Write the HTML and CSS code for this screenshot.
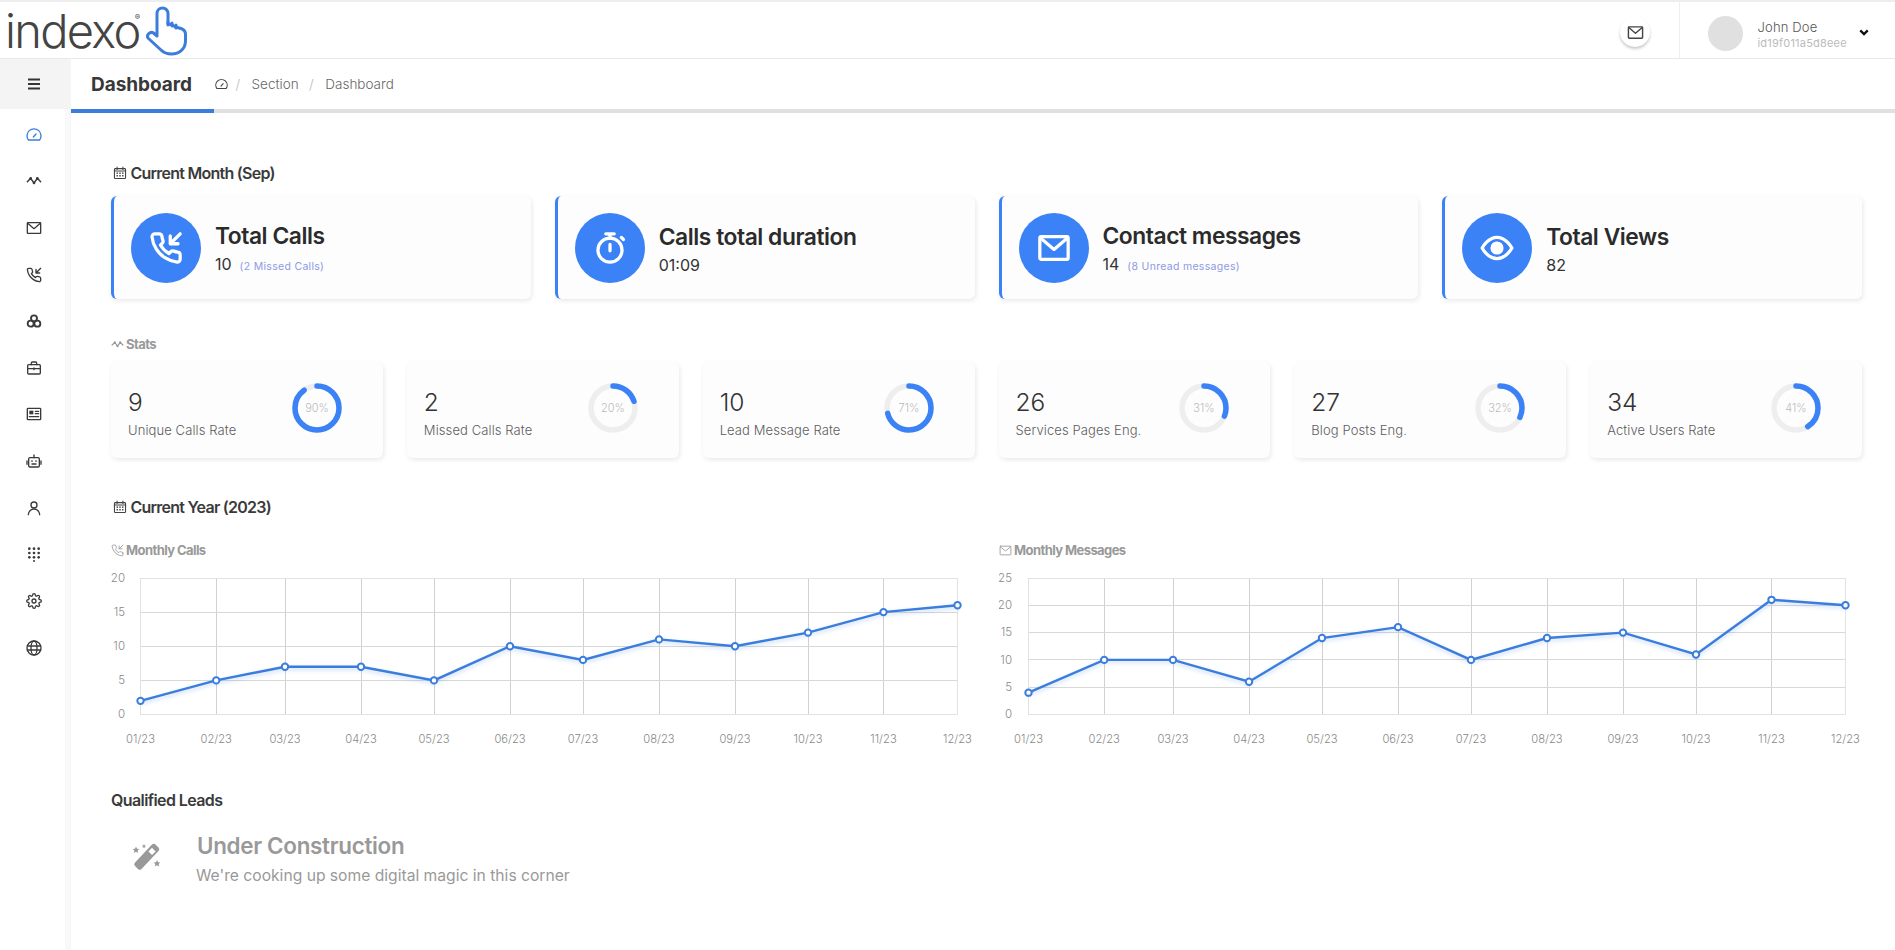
FILE: index.html
```html
<!DOCTYPE html>
<html lang="en">
<head>
<meta charset="utf-8">
<title>Dashboard</title>
<link rel="stylesheet" href="styles.css">
</head>
<body>
<svg class="defs" width="0" height="0">
  <defs>
    <symbol id="i-gauge" viewBox="0 0 24 24"><path d="M3.6 19.5a10.5 10.5 0 1 1 16.8 0z"/><path d="M11 15l4-4.5"/></symbol>
    <symbol id="i-stat" viewBox="0 0 24 24"><path d="M2 13l5-5 5 7 5-7 5 5" stroke-width="2.200"/><g fill="currentColor" stroke="none"><circle cx="7" cy="8" r="2"/><circle cx="12" cy="15" r="2"/><circle cx="17" cy="8" r="2"/></g></symbol>
    <symbol id="i-mail" viewBox="0 0 24 24"><rect x="2" y="4" width="20" height="16" rx="1"/><path d="M2.500 5l9.500 8 9.500-8"/></symbol>
    <symbol id="i-call" viewBox="0 0 24 24"><path d="M22 16.920v3a2 2 0 0 1-2.180 2 19.790 19.790 0 0 1-8.630-3.070 19.500 19.500 0 0 1-6-6 19.790 19.790 0 0 1-3.070-8.670A2 2 0 0 1 4.110 2h3a2 2 0 0 1 2 1.720 12.840 12.840 0 0 0 .7 2.810 2 2 0 0 1-.45 2.110L8.090 9.910a16 16 0 0 0 6 6l1.270-1.270a2 2 0 0 1 2.110-.45 12.840 12.840 0 0 0 2.810.7A2 2 0 0 1 22 16.920z"/><path d="M22 2l-7 7M15 3.500V9h5.500"/></symbol>
    <symbol id="i-cluster" viewBox="0 0 24 24"><circle cx="12" cy="8" r="4.500" stroke-width="2.800"/><circle cx="7" cy="16" r="4.500" stroke-width="2.800"/><circle cx="17" cy="16" r="4.500" stroke-width="2.800"/></symbol>
    <symbol id="i-case" viewBox="0 0 24 24"><rect x="2.500" y="7" width="19" height="14" rx="1.500"/><path d="M8 7V4.500A1.500 1.500 0 0 1 9.500 3h5A1.500 1.500 0 0 1 16 4.500V7M2.500 13h19M12 12v2.500"/></symbol>
    <symbol id="i-news" viewBox="0 0 24 24"><rect x="2" y="3.500" width="20" height="17" rx="1"/><rect x="5" y="7" width="6" height="5.500" fill="currentColor" stroke="none"/><path d="M14 8h5M14 11.500h5M5 16h14"/></symbol>
    <symbol id="i-bot" viewBox="0 0 24 24"><rect x="4" y="7" width="16" height="14" rx="2"/><path d="M12 7V3M1.500 12v5M22.500 12v5M9 16.500h6"/><circle cx="9" cy="12" r="1.300" fill="currentColor" stroke="none"/><circle cx="15" cy="12" r="1.300" fill="currentColor" stroke="none"/></symbol>
    <symbol id="i-user" viewBox="0 0 24 24"><circle cx="12" cy="7.500" r="4.500"/><path d="M3.500 22a8.500 8.500 0 0 1 17 0"/></symbol>
    <symbol id="i-dial" viewBox="0 0 24 24"><g fill="currentColor" stroke="none"><circle cx="5" cy="4" r="2"/><circle cx="12" cy="4" r="2"/><circle cx="19" cy="4" r="2"/><circle cx="5" cy="10.500" r="2"/><circle cx="12" cy="10.500" r="2"/><circle cx="19" cy="10.500" r="2"/><circle cx="5" cy="17" r="2"/><circle cx="12" cy="17" r="2"/><circle cx="19" cy="17" r="2"/><circle cx="12" cy="22.500" r="1.500"/></g></symbol>
    <symbol id="i-cog" viewBox="0 0 24 24"><path d="M12 15a3 3 0 1 0 0-6 3 3 0 0 0 0 6z"/><path d="M19.400 15a1.650 1.650 0 0 0 .33 1.820l.06.06a2 2 0 0 1 0 2.830 2 2 0 0 1-2.830 0l-.06-.06a1.650 1.650 0 0 0-1.820-.33 1.650 1.650 0 0 0-1 1.510V21a2 2 0 0 1-2 2 2 2 0 0 1-2-2v-.09A1.650 1.650 0 0 0 9 19.400a1.650 1.650 0 0 0-1.820.33l-.06.06a2 2 0 0 1-2.830 0 2 2 0 0 1 0-2.830l.06-.06a1.650 1.650 0 0 0 .33-1.820 1.650 1.650 0 0 0-1.510-1H3a2 2 0 0 1-2-2 2 2 0 0 1 2-2h.09A1.650 1.650 0 0 0 4.600 9a1.650 1.650 0 0 0-.33-1.820l-.06-.06a2 2 0 0 1 0-2.830 2 2 0 0 1 2.830 0l.06.06a1.650 1.650 0 0 0 1.820.33H9a1.650 1.650 0 0 0 1-1.510V3a2 2 0 0 1 2-2 2 2 0 0 1 2 2v.09a1.650 1.650 0 0 0 1 1.510 1.650 1.650 0 0 0 1.820-.33l.06-.06a2 2 0 0 1 2.830 0 2 2 0 0 1 0 2.830l-.06.06a1.650 1.650 0 0 0-.33 1.820V9a1.650 1.650 0 0 0 1.510 1H21a2 2 0 0 1 2 2 2 2 0 0 1-2 2h-.09a1.650 1.650 0 0 0-1.510 1z"/></symbol>
    <symbol id="i-globe" viewBox="0 0 24 24"><circle cx="12" cy="12" r="10.500"/><ellipse cx="12" cy="12" rx="4.500" ry="10.500"/><path d="M2 9h20M2 15h20"/></symbol>
    <symbol id="i-cal" viewBox="0 0 24 24"><rect x="2.500" y="4.500" width="19" height="17" rx="1.500"/><path d="M7 2v4M17 2v4M2.500 8.500h19"/><g fill="currentColor" stroke="none"><rect x="6" y="11" width="2.500" height="2.500"/><rect x="10.750" y="11" width="2.500" height="2.500"/><rect x="15.500" y="11" width="2.500" height="2.500"/><rect x="6" y="15.500" width="2.500" height="2.500"/><rect x="10.750" y="15.500" width="2.500" height="2.500"/><rect x="15.500" y="15.500" width="2.500" height="2.500"/></g></symbol>
    <symbol id="i-timer" viewBox="0 0 24 24"><circle cx="12" cy="13.500" r="8.500"/><path d="M9 2h6M12 2v3M12 9.500v4.500M20 4.500l1.500 1.500"/></symbol>
    <symbol id="i-eye" viewBox="0 0 24 24"><path d="M1.500 12S5.500 4.500 12 4.500 22.500 12 22.500 12 18.500 19.500 12 19.500 1.500 12 1.500 12z"/><circle cx="12" cy="12" r="3.500" fill="currentColor"/></symbol>
    <symbol id="i-wand" viewBox="0 0 32 32"><g fill="currentColor" stroke="none"><path d="M21 3.500a2.500 2.500 0 0 1 3.500 0l3 3a2.500 2.500 0 0 1 0 3.500L10.500 28a2.500 2.500 0 0 1-3.500 0l-3-3a2.500 2.500 0 0 1 0-3.500z"/><path d="M5 5.500l1 2.300 2.400.2-1.800 1.600.6 2.400L5 10.700 2.800 12l.6-2.400L1.600 8l2.400-.2zM13 3l.6 1.400 1.500.1-1.100 1 .3 1.500-1.300-.8-1.300.8.3-1.500-1.100-1 1.500-.1zM26 19l1 2.300 2.400.2-1.800 1.600.6 2.400-2.200-1.300-2.200 1.300.6-2.400-1.800-1.600 2.400-.2z"/></g><path d="M21 14l-3.500-3.500 3.500-3.700 3.600 3.600z" fill="#fff" stroke="none"/></symbol>
  </defs>
</svg>

<header class="topbar">
  <div class="logo">
    <span class="logo-text">indexo<sup class="logo-r">®</sup></span>
    <svg class="logo-hand" viewBox="0 0 44 52"><path d="M12 8.500a5.500 5.500 0 0 1 11 0V19l4 .8 3.500 2.200 5.500 1.500c3 1 4.500 3 4.500 6V36c0 7.500-6 13-14 13-4.500 0-8-1.500-10.500-4L3.500 33.500c-3-3.500 2-7.500 5-5.500l3.500 3z"/><path d="M23 17v3M27 18v3M31 20v3"/></svg>
  </div>
  <div class="top-actions">
    <button class="mail-btn"><svg class="ic ic-17"><use href="#i-mail"/></svg></button>
    <div class="profile">
      <span class="avatar"></span>
      <span class="who"><span class="who-name">John Doe</span><span class="who-id">id19f011a5d8eee</span></span>
      <svg class="chev" viewBox="0 0 12 8"><path d="M1.500 1.500L6 6l4.500-4.500"/></svg>
    </div>
  </div>
</header>

<div class="shell">
  <aside class="sidebar">
    <div class="toggle"><svg class="burger" viewBox="0 0 14 12"><path d="M1 1.500h12M1 6h12M1 10.500h12"/></svg></div>
    <nav class="nav">
      <a class="nav-item active"><svg class="ic ic-16"><use href="#i-gauge"/></svg></a>
      <a class="nav-item"><svg class="ic ic-16"><use href="#i-stat"/></svg></a>
      <a class="nav-item"><svg class="ic ic-16"><use href="#i-mail"/></svg></a>
      <a class="nav-item"><svg class="ic ic-16"><use href="#i-call"/></svg></a>
      <a class="nav-item"><svg class="ic ic-16"><use href="#i-cluster"/></svg></a>
      <a class="nav-item"><svg class="ic ic-16"><use href="#i-case"/></svg></a>
      <a class="nav-item"><svg class="ic ic-16"><use href="#i-news"/></svg></a>
      <a class="nav-item"><svg class="ic ic-16"><use href="#i-bot"/></svg></a>
      <a class="nav-item"><svg class="ic ic-16"><use href="#i-user"/></svg></a>
      <a class="nav-item"><svg class="ic ic-16"><use href="#i-dial"/></svg></a>
      <a class="nav-item"><svg class="ic ic-16"><use href="#i-cog"/></svg></a>
      <a class="nav-item"><svg class="ic ic-16"><use href="#i-globe"/></svg></a>
    </nav>
  </aside>

  <main class="main">
    <div class="titlebar">
      <h1 class="page-title">Dashboard</h1>
      <div class="crumbs">
        <svg class="ic ic-13"><use href="#i-gauge"/></svg>
        <span class="sep">/</span><span>Section</span>
        <span class="sep">/</span><span>Dashboard</span>
      </div>
    </div>

    <div class="content">
      <h2 class="section first"><svg class="ic ic-14"><use href="#i-cal"/></svg>Current Month (Sep)</h2>
      <div class="kpis">
        <div class="kpi"><span class="kpi-ico"><svg class="ic ic-34"><use href="#i-call"/></svg></span><div><div class="kpi-title">Total Calls</div><div class="kpi-val">10<small>(2 Missed Calls)</small></div></div></div>
        <div class="kpi"><span class="kpi-ico"><svg class="ic ic-34"><use href="#i-timer"/></svg></span><div><div class="kpi-title">Calls total duration</div><div class="kpi-val">01:09</div></div></div>
        <div class="kpi"><span class="kpi-ico"><svg class="ic ic-34"><use href="#i-mail"/></svg></span><div><div class="kpi-title">Contact messages</div><div class="kpi-val">14<small>(8 Unread messages)</small></div></div></div>
        <div class="kpi"><span class="kpi-ico"><svg class="ic ic-34"><use href="#i-eye"/></svg></span><div><div class="kpi-title">Total Views</div><div class="kpi-val">82</div></div></div>
      </div>

      <h3 class="sub stats-title"><svg class="ic ic-13"><use href="#i-stat"/></svg>Stats</h3>
      <div class="stats">
        <div class="stat"><div class="stat-text"><div class="stat-num">9</div><div class="stat-label">Unique Calls Rate</div></div><svg class="donut" viewBox="0 0 50 50"><circle class="track" cx="25" cy="25" r="22"/><circle class="arc" cx="25" cy="25" r="22" pathLength="100" stroke-dasharray="90 100" transform="rotate(-90 25 25)"/><text x="25" y="29">90%</text></svg></div>
        <div class="stat"><div class="stat-text"><div class="stat-num">2</div><div class="stat-label">Missed Calls Rate</div></div><svg class="donut" viewBox="0 0 50 50"><circle class="track" cx="25" cy="25" r="22"/><circle class="arc" cx="25" cy="25" r="22" pathLength="100" stroke-dasharray="20 100" transform="rotate(-90 25 25)"/><text x="25" y="29">20%</text></svg></div>
        <div class="stat"><div class="stat-text"><div class="stat-num">10</div><div class="stat-label">Lead Message Rate</div></div><svg class="donut" viewBox="0 0 50 50"><circle class="track" cx="25" cy="25" r="22"/><circle class="arc" cx="25" cy="25" r="22" pathLength="100" stroke-dasharray="71 100" transform="rotate(-90 25 25)"/><text x="25" y="29">71%</text></svg></div>
        <div class="stat"><div class="stat-text"><div class="stat-num">26</div><div class="stat-label">Services Pages Eng.</div></div><svg class="donut" viewBox="0 0 50 50"><circle class="track" cx="25" cy="25" r="22"/><circle class="arc" cx="25" cy="25" r="22" pathLength="100" stroke-dasharray="31 100" transform="rotate(-90 25 25)"/><text x="25" y="29">31%</text></svg></div>
        <div class="stat"><div class="stat-text"><div class="stat-num">27</div><div class="stat-label">Blog Posts Eng.</div></div><svg class="donut" viewBox="0 0 50 50"><circle class="track" cx="25" cy="25" r="22"/><circle class="arc" cx="25" cy="25" r="22" pathLength="100" stroke-dasharray="32 100" transform="rotate(-90 25 25)"/><text x="25" y="29">32%</text></svg></div>
        <div class="stat"><div class="stat-text"><div class="stat-num">34</div><div class="stat-label">Active Users Rate</div></div><svg class="donut" viewBox="0 0 50 50"><circle class="track" cx="25" cy="25" r="22"/><circle class="arc" cx="25" cy="25" r="22" pathLength="100" stroke-dasharray="41 100" transform="rotate(-90 25 25)"/><text x="25" y="29">41%</text></svg></div>
      </div>

      <h2 class="section year"><svg class="ic ic-14"><use href="#i-cal"/></svg>Current Year (2023)</h2>
      <div class="charts">
        <section>
          <h3 class="sub"><svg class="ic ic-13"><use href="#i-call"/></svg>Monthly Calls</h3>
          <svg class="chart" width="864" height="190" viewBox="0 0 864 190">
            <path class="grid-v" d="M105.200 12V148.500M174 12V148.500M250 12V148.500M323 12V148.500M399 12V148.500M472 12V148.500M548 12V148.500M624 12V148.500M697 12V148.500M772.500 12V148.500"/>
            <path class="grid-h" d="M29.500 46.100H846.500M29.500 80.250H846.500M29.500 114.400H846.500"/>
            <path class="grid-o" d="M29.500 12H846.500V148.500H29.500z"/>
            <g class="ylab"><text x="14" y="16">20</text><text x="14" y="50">15</text><text x="14" y="84">10</text><text x="14" y="118">5</text><text x="14" y="152">0</text></g>
            <g class="xlab"><text x="29.500" y="177">01/23</text><text x="105.200" y="177">02/23</text><text x="174" y="177">03/23</text><text x="250" y="177">04/23</text><text x="323" y="177">05/23</text><text x="399" y="177">06/23</text><text x="472" y="177">07/23</text><text x="548" y="177">08/23</text><text x="624" y="177">09/23</text><text x="697" y="177">10/23</text><text x="772.500" y="177">11/23</text><text x="846.500" y="177">12/23</text></g>
            <polyline class="line" points="29.500,134.850 105.200,114.400 174,100.700 250,100.700 323,114.400 399,80.250 472,93.900 548,73.400 624,80.250 697,66.600 772.500,46.100 846.500,39.300"/>
            <g class="pts"><circle cx="29.500" cy="134.850" r="3.200"/><circle cx="105.200" cy="114.400" r="3.200"/><circle cx="174" cy="100.700" r="3.200"/><circle cx="250" cy="100.700" r="3.200"/><circle cx="323" cy="114.400" r="3.200"/><circle cx="399" cy="80.250" r="3.200"/><circle cx="472" cy="93.900" r="3.200"/><circle cx="548" cy="73.400" r="3.200"/><circle cx="624" cy="80.250" r="3.200"/><circle cx="697" cy="66.600" r="3.200"/><circle cx="772.500" cy="46.100" r="3.200"/><circle cx="846.500" cy="39.300" r="3.200"/></g>
          </svg>
        </section>
        <section>
          <h3 class="sub"><svg class="ic ic-13"><use href="#i-mail"/></svg>Monthly Messages</h3>
          <svg class="chart" width="864" height="190" viewBox="0 0 864 190">
            <path class="grid-v" d="M105.200 12V148.500M174 12V148.500M250 12V148.500M323 12V148.500M399 12V148.500M472 12V148.500M548 12V148.500M624 12V148.500M697 12V148.500M772.500 12V148.500"/>
            <path class="grid-h" d="M29.500 39.300H846.500M29.500 66.600H846.500M29.500 93.900H846.500M29.500 121.200H846.500"/>
            <path class="grid-o" d="M29.500 12H846.500V148.500H29.500z"/>
            <g class="ylab"><text x="13" y="16">25</text><text x="13" y="43">20</text><text x="13" y="70">15</text><text x="13" y="98">10</text><text x="13" y="125">5</text><text x="13" y="152">0</text></g>
            <g class="xlab"><text x="29.500" y="177">01/23</text><text x="105.200" y="177">02/23</text><text x="174" y="177">03/23</text><text x="250" y="177">04/23</text><text x="323" y="177">05/23</text><text x="399" y="177">06/23</text><text x="472" y="177">07/23</text><text x="548" y="177">08/23</text><text x="624" y="177">09/23</text><text x="697" y="177">10/23</text><text x="772.500" y="177">11/23</text><text x="846.500" y="177">12/23</text></g>
            <polyline class="line" points="29.500,126.660 105.200,93.900 174,93.900 250,115.740 323,72.060 399,61.140 472,93.900 548,72.060 624,66.600 697,88.440 772.500,33.840 846.500,39.300"/>
            <g class="pts"><circle cx="29.500" cy="126.660" r="3.200"/><circle cx="105.200" cy="93.900" r="3.200"/><circle cx="174" cy="93.900" r="3.200"/><circle cx="250" cy="115.740" r="3.200"/><circle cx="323" cy="72.060" r="3.200"/><circle cx="399" cy="61.140" r="3.200"/><circle cx="472" cy="93.900" r="3.200"/><circle cx="548" cy="72.060" r="3.200"/><circle cx="624" cy="66.600" r="3.200"/><circle cx="697" cy="88.440" r="3.200"/><circle cx="772.500" cy="33.840" r="3.200"/><circle cx="846.500" cy="39.300" r="3.200"/></g>
          </svg>
        </section>
      </div>

      <h2 class="section leads">Qualified Leads</h2>
      <div class="construction">
        <svg class="wand"><use href="#i-wand"/></svg>
        <div>
          <div class="uc-title">Under Construction</div>
          <div class="uc-text">We're cooking up some digital magic in this corner</div>
        </div>
      </div>
    </div>
  </main>
</div>
</body>
</html>
```

FILE: styles.css
```css
* { box-sizing: border-box; }
html, body { margin: 0; height: 100%; }
body {
  height: 950px;
  overflow: hidden;
  background: #fff;
  color: #333;
  font-family: Inter, "Liberation Sans", sans-serif;
  display: flex;
  flex-direction: column;
}
.defs { position: absolute; }
.ic { fill: none; stroke: currentColor; stroke-width: 2; stroke-linecap: round; stroke-linejoin: round; flex: none; display: block; }
.ic-13 { width: 13px; height: 13px; }
.ic-14 { width: 14px; height: 14px; }
.ic-16 { width: 16px; height: 16px; }
.ic-17 { width: 17px; height: 17px; }
.ic-34 { width: 34px; height: 34px; stroke-width: 2.300; }

/* top bar */
.topbar {
  height: 59px;
  flex: none;
  border-top: 2px solid #eee;
  border-bottom: 1px solid #e8e8e8;
  display: flex;
  justify-content: space-between;
}
.logo { display: flex; align-items: flex-start; padding-left: 5px; }
.logo-text {
  font-family: Inter, sans-serif;
  font-weight: 300;
  font-size: 47px;
  line-height: 56px;
  letter-spacing: -1.7px;
  color: #444;
  white-space: nowrap;
  margin-top: 1px;
}
.logo-r { font-size: 8px; font-weight: 400; vertical-align: 28px; line-height: 0; letter-spacing: 0; margin-left: -5px; margin-right: 2px; }
.logo-hand { width: 44px; height: 52px; margin: 3px 0 0 3px; fill: none; stroke: #3b7ddd; stroke-width: 3; stroke-linejoin: round; stroke-linecap: round; }
.top-actions { display: flex; align-items: stretch; }
.mail-btn {
  width: 30px; height: 30px; margin: 15px 29px 0 0;
  border: 0; border-radius: 50%;
  background: #fff; color: #444;
  box-shadow: 0 2px 3px rgba(0,0,0,.22);
  display: flex; align-items: center; justify-content: center;
  padding: 0;
}
.profile {
  width: 216px;
  border-left: 1px solid #eee;
  display: flex;
  align-items: center;
  padding-left: 28px;
}
.avatar { width: 35px; height: 35px; border-radius: 50%; background: #e0e0e0; margin-top: 7px; flex: none; }
.who { display: flex; flex-direction: column; margin-left: 14.500px; width: 97.500px; margin-top: 9px; }
.who-name { font-size: 13px; line-height: 17px; color: #555; font-weight: 300; letter-spacing: .15px; }
.who-id { font-size: 11px; line-height: 14px; color: #bbb; letter-spacing: .2px; }
.chev { width: 10px; height: 7px; margin-left: 4px; margin-top: 5px; fill: none; stroke: #111; stroke-width: 2.800; }

/* shell */
.shell { flex: 1; display: flex; min-height: 0; }
.sidebar { width: 71px; flex: none; border-right: 1px solid #f5f5f5; background: #f9f9f9; }
.toggle { height: 50px; background: #f4f4f4; display: flex; align-items: center; justify-content: center; padding-right: 3px; }
.burger { width: 14px; height: 12px; fill: none; stroke: #333; stroke-width: 1.800; }
.nav { width: 65px; height: calc(100% - 50px); background: #fff; padding: 2.500px 0 0 2px; display: flex; flex-direction: column; }
.nav-item { height: 46.620px; flex: none; display: flex; align-items: center; justify-content: center; color: #3a3a3a; }
.nav-item.active { color: #3b7ddd; }

/* main */
.main { flex: 1; min-width: 0; }
.titlebar {
  height: 54px;
  border-bottom: 4px solid #e0e0e0;
  display: flex;
  align-items: center;
  position: relative;
  padding-left: 20px;
}
.titlebar::after { content: ""; position: absolute; left: 0; bottom: -4px; width: 143px; height: 4px; background: #3b7ddd; }
.page-title { margin: 0; font-size: 19px; font-weight: 700; color: #383838; letter-spacing: -.05px; }
.crumbs { display: flex; align-items: center; margin-left: 23px; font-size: 13.500px; font-weight: 300; color: #666; }
.crumbs .ic { color: #444; margin-right: -3px; }
.sep { color: #bbb; margin: 0 11.500px 0 10.500px; }

.content { padding: 50px 33px 0 40px; }
.section {
  margin: 0;
  display: flex;
  align-items: center;
  gap: 3.500px;
  font-size: 16px;
  line-height: 20px;
  font-weight: 600;
  letter-spacing: -.75px;
  color: #3a3a3a;
}
.section .ic { margin-left: 2px; color: #444; stroke-width: 1.900; }
.sub {
  margin: 0;
  display: flex;
  align-items: center;
  gap: 2px;
  font-size: 13px;
  line-height: 18px;
  font-weight: 700;
  letter-spacing: -.58px;
  color: #999;
}
.sub .ic { stroke-width: 1.600; color: #999; }

.kpis { display: grid; grid-template-columns: repeat(4, 1fr); gap: 24px; margin-top: 13px; }
.kpi {
  height: 103px;
  background: #fdfdfe;
  border-left: 3px solid #3b82f6;
  border-radius: 6px;
  box-shadow: 1px 2px 5px rgba(0,0,0,.09);
  display: flex;
  align-items: center;
  padding-left: 17px;
  gap: 14px;
}
.kpi-ico { width: 70px; height: 70px; border-radius: 50%; background: #3b82f6; color: #fff; display: flex; align-items: center; justify-content: center; flex: none; }
.kpi-title { font-size: 22.800px; line-height: 28px; font-weight: 600; letter-spacing: -.45px; color: #2b2b2b; margin-top: 4px; }
.kpi-val { font-size: 16px; line-height: 22px; color: #333; font-weight: 400; margin-top: 3px; display: flex; align-items: baseline; }
.kpi-val small { font-size: 10.500px; color: #9099e3; margin-left: 8px; letter-spacing: .3px; }

.stats-title { margin-top: 36px; }
.stats { display: grid; grid-template-columns: repeat(6, 1fr); gap: 24px; margin-top: 9px; }
.stat {
  height: 96px;
  background: #fdfdfe;
  border-radius: 6px;
  box-shadow: 1px 2px 5px rgba(0,0,0,.09);
  display: flex;
  align-items: center;
  justify-content: space-between;
  padding: 0 41px 0 17px;
}
.stat-text { margin-top: 4px; }
.stat-num { font-size: 24.500px; line-height: 32px; color: #333; font-weight: 300; }
.stat-label { font-size: 13px; line-height: 18px; color: #5c5c5c; font-weight: 300; margin-top: 3px; letter-spacing: .1px; }
.donut { width: 50px; height: 50px; flex: none; margin-top: -4px; }
.track { fill: none; stroke: #eee; stroke-width: 5.500; }
.arc { fill: none; stroke: #3b82f6; stroke-width: 5.500; stroke-linecap: round; }
.donut text { font-size: 11px; font-weight: 300; fill: #bbb; text-anchor: middle; }

.year { margin-top: 39px; }
.charts { display: grid; grid-template-columns: repeat(2, 1fr); gap: 24px; margin-top: 24px; }
.chart { display: block; margin-top: 7px; }
.grid-v { stroke: #d0d0d0; stroke-width: 1; fill: none; shape-rendering: crispEdges; }
.grid-h { stroke: #d8d8d8; stroke-width: 1; fill: none; shape-rendering: crispEdges; }
.grid-o { stroke: #e2e2e2; stroke-width: 1; fill: none; shape-rendering: crispEdges; }
.ylab text { font-size: 11.500px; font-weight: 300; fill: #888; text-anchor: end; }
.xlab text { font-size: 11.200px; font-weight: 300; fill: #888; text-anchor: middle; }
.line { fill: none; stroke: #3b7ddd; stroke-width: 2.400; filter: drop-shadow(0 2px 2px rgba(59,125,221,.3)); }
.pts circle { fill: #fff; stroke: #3b7ddd; stroke-width: 2; }

.leads { margin-top: 34px; letter-spacing: -.6px; }
.construction { display: flex; align-items: flex-start; margin-top: 22px; padding-left: 20px; }
.wand { width: 32px; height: 32px; color: #999; margin-top: 9px; flex: none; }
.uc-title { font-size: 22.400px; line-height: 28px; font-weight: 600; color: #999; letter-spacing: -.3px; margin-left: 34px; }
.uc-text { font-size: 15.650px; line-height: 22px; font-weight: 400; color: #999; margin: 5px 0 0 33px; }
```
